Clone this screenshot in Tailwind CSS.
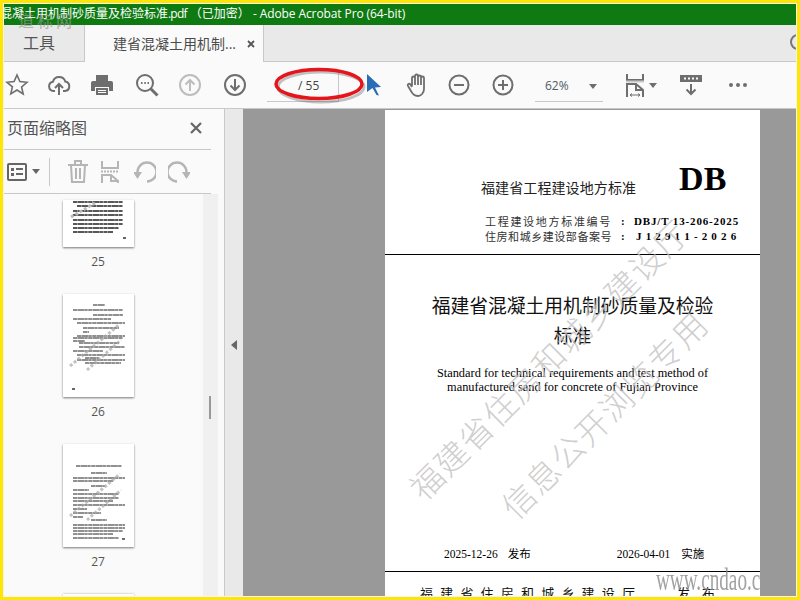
<!DOCTYPE html>
<html lang="zh-CN">
<head>
    <meta charset="UTF-8">
    <title>Adobe Acrobat Pro</title>
    <script src="https://cdn.jsdelivr.net/npm/@tailwindcss/browser@4"></script>
</head>
<body class="w-[800px] h-[600px] overflow-hidden bg-[#ffe600] p-[3px] font-['Open_Sans','Noto_Sans_CJK_SC',sans-serif]">
<div class="relative w-[794px] h-[594px] border border-[#f4f4f4] bg-[#fafafa] flex flex-col overflow-hidden">

    <!-- title bar -->
    <div class="h-[21px] shrink-0 bg-[#0f7a12] text-white text-[12px] leading-[19px] whitespace-nowrap -ml-[4px]">混凝土用机制砂质量及检验标准<span class="tracking-[-.8px]">.pdf</span> （已加密） <span class="tracking-[-.1px]">- Adobe Acrobat Pro (64-bit)</span></div>

    <!-- tabs -->
    <div class="h-[37px] shrink-0 bg-[#e9e9e9] border-b border-[#c8c8c8] flex relative">
        <div class="w-[80px] flex items-center pl-[19px] text-[16px] text-[#555]">工具</div>
        <div class="w-[180px] h-[37px] bg-[#fafafa] border-l border-r border-[#c8c8c8] flex items-center pl-[28px] text-[14px] text-[#4b4b4b] whitespace-nowrap">
            建省混凝土用机制...
            <svg class="ml-[11px]" width="8" height="8" viewBox="0 0 8 8"><path d="M1 1l6 6M7 1l-6 6" stroke="#555" stroke-width="1.8"/></svg>
        </div>
        <div class="absolute right-[-10px] top-[9px] w-[16px] h-[16px] rounded-full border-2 border-[#777]"></div>
        <div class="absolute left-[14px] top-[-15px] text-[16px] tracking-[3px] text-[#9a9a9a]/70 font-['Liberation_Serif','Noto_Sans_CJK_SC',serif]">道标网</div>
    </div>

    <!-- toolbar -->
    <div class="h-[47px] shrink-0 bg-[#fafafa] border-b border-[#c8c8c8] flex items-center text-[#6e6e6e] relative">
        <svg class="ml-[1px]" width="24" height="24" viewBox="0 0 24 24" fill="none" stroke="#6e6e6e" stroke-width="1.6"><path d="M12 2l2.9 6.6 7.1.7-5.4 4.7 1.6 7L12 17l-6.2 3.900 1.600-7L2 9.300l7.100-.7z"/></svg>
        <svg class="ml-[18px]" width="24" height="24" viewBox="0 0 24 24" fill="none" stroke="#6e6e6e" stroke-width="2"><path d="M8 18H6.500a4.700 4.700 0 0 1-.6-9.300A6.500 6.500 0 0 1 18.300 8.500 4.800 4.800 0 0 1 18 18h-2"/><path d="M12 22V11M8 15l4-4 4 4"/></svg>
        <svg class="ml-[19px]" width="24" height="24" viewBox="0 0 24 24"><path fill="#6e6e6e" d="M6 2h12v6H6zM3 8h18a2 2 0 0 1 2 2v8h-4v-4H5v4H1v-8a2 2 0 0 1 2-2z"/><path fill="#6e6e6e" d="M6 15h12v7H6z"/><path fill="#fafafa" d="M8 17h8v1H8zM8 19h8v1H8z"/></svg>
        <svg class="ml-[21px]" width="24" height="24" viewBox="0 0 24 24" fill="none" stroke="#6e6e6e"><circle cx="10" cy="10" r="8" stroke-width="2"/><path d="M15.500 15.500l7 7" stroke-width="3"/><path d="M6 10h1.500M9.300 10h1.500M12.500 10h1.500" stroke-width="1.800"/></svg>
        <svg class="ml-[19px]" width="24" height="24" viewBox="0 0 24 24" fill="none" stroke="#bdbdbd" stroke-width="2"><circle cx="12" cy="12" r="10"/><path d="M12 18V7M7.500 11.500L12 7l4.500 4.500"/></svg>
        <svg class="ml-[21px]" width="24" height="24" viewBox="0 0 24 24" fill="none" stroke="#6e6e6e" stroke-width="2"><circle cx="12" cy="12" r="10"/><path d="M12 6v11M7.500 12.500L12 17l4.500-4.500"/></svg>
        <div class="ml-[20px] w-[72px] h-[30px] mt-[3px] border-b border-r border-[#c8c8c8] text-[12px] text-[#444] flex items-center pl-[31px]">/ 55</div>
        <svg class="ml-[27px]" width="16" height="22" viewBox="0 0 16 22"><path fill="#2a6db5" d="M1 0l14 13-6 .5 4 8-2.500-.5-4-7L1 18z"/></svg>
        <svg class="ml-[24px]" width="24" height="25" viewBox="0 0 24 25" fill="none" stroke="#6e6e6e" stroke-width="1.800"><path d="M6 13V5a1.500 1.500 0 0 1 3 0V3a1.500 1.500 0 0 1 3 0v1a1.500 1.500 0 0 1 3 0v1a1.500 1.500 0 0 1 3 0v11c0 4-3 7-6 7-4 0-5-2-7-5l-3-5c-1-2 1-3 2.500-1.500L6 14"/><path d="M9 5v7M12 4v8M15 5v7"/></svg>
        <svg class="ml-[18px]" width="22" height="22" viewBox="0 0 22 22" fill="none" stroke="#6e6e6e" stroke-width="2"><circle cx="11" cy="11" r="9.500"/><path d="M6 11h10"/></svg>
        <svg class="ml-[22px]" width="22" height="22" viewBox="0 0 22 22" fill="none" stroke="#6e6e6e" stroke-width="2"><circle cx="11" cy="11" r="9.500"/><path d="M6 11h10M11 6v10"/></svg>
        <div class="ml-[21px] w-[68px] h-[30px] mt-[3px] border-b border-[#c8c8c8] text-[12px] text-[#4f5b66] flex items-center pl-[10px]">62%
            <span class="ml-[20px] w-0 h-0 border-l-[4px] border-r-[4px] border-t-[5px] border-l-transparent border-r-transparent border-t-[#6e6e6e]"></span>
        </div>
        <svg class="ml-[23px] mt-[2px]" width="18" height="24" viewBox="0 0 18 24" fill="none" stroke="#6e6e6e" stroke-width="2"><path d="M1 0v6h16V0"/><path d="M0 7.500h18" stroke="#c8c8c8"/><path d="M1 23V10h9l7 6v7M10 10v6h7" /><path d="M4 21h10M4 21l2-1.500M4 21l2 1.500M14 21l-2-1.500M14 21l-2 1.500" stroke-width="1"/></svg>
        <span class="ml-[5px] w-0 h-0 border-l-[4px] border-r-[4px] border-t-[5px] border-l-transparent border-r-transparent border-t-[#6e6e6e]"></span>
        <svg class="ml-[23px]" width="22" height="22" viewBox="0 0 22 22"><path fill="#6e6e6e" d="M0 1h22v7H0z"/><path fill="#fafafa" d="M4 3.500h2v2H4zM8 3.500h2v2H8zM12 3.500h2v2h-2zM16 3.500h2v2h-2z"/><path d="M11 10v10M6.500 15.500L11 20l4.500-4.500" fill="none" stroke="#6e6e6e" stroke-width="2"/></svg>
        <div class="ml-[27px] flex gap-[3px]">
            <span class="w-[4px] h-[4px] rounded-full bg-[#6e6e6e]"></span>
            <span class="w-[4px] h-[4px] rounded-full bg-[#6e6e6e]"></span>
            <span class="w-[4px] h-[4px] rounded-full bg-[#6e6e6e]"></span>
        </div>
    </div>

    <!-- red ring drawn over the page box -->
    <svg class="absolute left-[266px] top-[58px]" width="106" height="46" viewBox="0 0 106 46" fill="none">
        <ellipse cx="51" cy="25" rx="43" ry="15" stroke="#555" stroke-opacity=".35" stroke-width="3"/>
        <ellipse cx="49" cy="22" rx="43" ry="14.500" stroke="#e4151b" stroke-width="3.500"/>
    </svg>

    <div class="flex flex-1 min-h-0">
        <!-- thumbnails panel -->
        <aside class="w-[220px] shrink-0 bg-[#fafafa] flex flex-col">
            <div class="h-[41px] shrink-0 w-[207px] border-b border-[#c8c8c8] flex items-center justify-between pb-[2px] pl-[3px] pr-[9px] text-[16px] text-[#555]">
                <span>页面缩略图</span>
                <svg width="12" height="12" viewBox="0 0 12 12"><path d="M1 1l10 10M11 1L1 11" stroke="#666" stroke-width="2.200"/></svg>
            </div>
            <div class="h-[44px] shrink-0 w-[207px] border-b border-[#c8c8c8] flex items-center pl-[3px]">
                <svg width="20" height="18" viewBox="0 0 20 18" fill="none"><rect x="1" y="1" width="18" height="16" rx="1" stroke="#666" stroke-width="2"/><path fill="#666" d="M4 5h3v3H4zM4 10h3v3H4zM9 5h7v2H9zM9 10h7v2H9z"/></svg>
                <span class="ml-[5px] w-0 h-0 border-l-[4px] border-r-[4px] border-t-[5px] border-l-transparent border-r-transparent border-t-[#666]"></span>
                <span class="ml-[9px] w-px h-[28px] bg-[#c8c8c8]"></span>
                <svg class="ml-[18px]" width="20" height="23" viewBox="0 0 20 23" fill="none" stroke="#b5b5b5" stroke-width="2"><path d="M0 5h20M7 5V1h6v4M3 5l1 17h12l1-17M8 8v11M12 8v11"/></svg>
                <svg class="ml-[13px]" width="18" height="22" viewBox="0 0 18 22" fill="none" stroke="#b5b5b5" stroke-width="2"><path d="M1 0v7h16V0M1 22V14h9l7 6v2M10 14v6h7"/><path d="M0 10.500h18" stroke-dasharray="2 1"/></svg>
                <svg class="ml-[15px]" width="22" height="22" viewBox="0 0 22 22" fill="none" stroke="#b5b5b5" stroke-width="2.400"><path d="M13 20.500A9.500 9.500 0 1 0 3.500 11"/><path fill="#b5b5b5" stroke="none" d="M-1 11h9l-4.500 7z"/></svg>
                <svg class="ml-[12px]" width="22" height="22" viewBox="0 0 22 22" fill="none" stroke="#b5b5b5" stroke-width="2.400"><path d="M9 20.500A9.500 9.500 0 1 1 18.500 11"/><path fill="#b5b5b5" stroke="none" d="M23 11h-9l4.500 7z"/></svg>
            </div>
            <div class="flex-1 min-h-0 flex overflow-hidden">
                <div class="w-[199px] h-full overflow-hidden relative pt-[6px] flex flex-col items-center pr-[11px] text-[12px] text-[#555]">
                    <!-- page 25, scrolled partly out of the panel -->
                    <div class="h-[47px] w-[71px] shrink-0 bg-white shadow-[0_1px_2px_#777] overflow-hidden">
                        <svg class="blur-[.35px]" width="71" height="47" viewBox="0 0 71 47" fill="none"><path d="M10 2h50M14 6h46M10 11h50M10 15h50M10 20h50M10 24h50M10 28h46M10 32h40" stroke="#222" stroke-width="1.300" stroke-dasharray="4 .4 7 .3 3 .5"/><path d="M60 38h3" stroke="#333" stroke-width="1.500"/><path d="M8 17l24-14" stroke="#bbb" stroke-width="3" stroke-dasharray="3 2"/></svg>
                    </div>
                    <div class="h-[47px] shrink-0 pt-[6px]">25</div>
                    <!-- page 26 -->
                    <div class="h-[103px] w-[71px] shrink-0 bg-white shadow-[0_1px_2px_#777]">
                        <svg class="blur-[.35px]" width="71" height="103" viewBox="0 0 71 103" fill="none"><path d="M30 11h12M10 16h50M30 21h30M10 25h38M14 29h48M20 34h36M20 38h6M14 42h48M10 44h50M10 47h12M16 49h40M16 53h46M10 57h30M14 61h48M22 64h14M14 66h48M22 69h36" stroke="#222" stroke-width="1.200" stroke-dasharray="4 .4 7 .3 3 .5"/><path d="M9 95h3" stroke="#333" stroke-width="1.500"/><path d="M7 72l50-42M24 76l34-30" stroke="#aaa" stroke-width="3" stroke-dasharray="3 2" opacity=".7"/></svg>
                    </div>
                    <div class="h-[47px] shrink-0 pt-[6px]">26</div>
                    <!-- page 27 -->
                    <div class="h-[103px] w-[71px] shrink-0 bg-white shadow-[0_1px_2px_#777]">
                        <svg class="blur-[.35px]" width="71" height="103" viewBox="0 0 71 103" fill="none"><path d="M13 22h46M28 29h16M10 34h52M10 37h40M28 42h14M10 46h16M10 50h46M10 54h46M10 57h40M10 61h52M10 65h14M10 69h28M10 73h10M28 76h16M10 81h52M10 84h52M10 87h50M10 90h40M10 94h46" stroke="#222" stroke-width="1.200" stroke-dasharray="4 .4 7 .3 3 .5"/><path d="M59 95h3" stroke="#333" stroke-width="1.400"/><path d="M7 72l50-42M24 76l34-30" stroke="#aaa" stroke-width="3" stroke-dasharray="3 2" opacity=".7"/></svg>
                    </div>
                    <div class="h-[47px] shrink-0 pt-[6px]">27</div>
                    <div class="h-[10px] w-[71px] shrink-0 bg-white shadow-[0_0_2px_#aaa]"></div>
                </div>
                <div class="w-[15px] h-full bg-[#f0f0f0] relative">
                    <div class="absolute left-[6px] top-[202px] w-[2px] h-[23px] bg-[#999]"></div>
                </div>
            </div>
        </aside>

        <!-- collapse gutter -->
        <div class="w-[19px] shrink-0 bg-[#e9e9e9] border-l border-[#c8c8c8] flex items-center justify-center">
            <span class="mr-[1px] mt-[-16px] w-0 h-0 border-t-[5px] border-b-[5px] border-r-[6px] border-t-transparent border-b-transparent border-r-[#666]"></span>
        </div>

        <!-- document -->
        <main class="flex-1 bg-[#999] pl-[142px] pr-[36px] pt-px overflow-hidden relative">
            <div class="relative h-[490px] bg-white overflow-hidden text-black font-['Liberation_Serif','Noto_Sans_CJK_SC',serif]">
                <div class="h-[145px] border-b border-black relative">
                    <div class="flex items-end pt-[49px] pl-[96px]">
                        <span class="text-[14px] tracking-[.1px] leading-[24px] text-[#222] font-['Noto_Sans_CJK_SC',sans-serif]">福建省工程建设地方标准</span>
                        <span class="ml-[43px] text-[34px] leading-[40px] font-bold">DB</span>
                    </div>
                    <div class="mt-[15px] pl-[100px] text-[11px] leading-[15px] whitespace-nowrap">
                        <div class="flex"><span class="w-[136px] tracking-[1.7px] text-[#333] font-['Noto_Sans_CJK_SC',sans-serif]">工程建设地方标准编号</span><span class="w-[13px] font-bold">:</span><span class="font-bold tracking-[.85px]">DBJ/T 13-206-2025</span></div>
                        <div class="flex"><span class="w-[136px] tracking-[.55px] text-[#333] font-['Noto_Sans_CJK_SC',sans-serif]">住房和城乡建设部备案号</span><span class="w-[15px] font-bold">:</span><span class="font-bold tracking-[.7px]">J 1 2 9 1 1 - 2 0 2 6</span></div>
                    </div>
                </div>
                <div class="h-[317px] border-b border-black text-center">
                    <div class="pt-[35px] text-[18.8px] leading-[30px] text-[#111] font-['Noto_Sans_CJK_SC',sans-serif]">福建省混凝土用机制砂质量及检验<br>标准</div>
                    <div class="mt-[16px] text-[12.35px] leading-[14px]">Standard for technical requirements and test method of<br>manufactured sand for concrete of Fujian Province</div>
                    <div class="mt-[152px] flex text-[11.500px] leading-[16px] text-left whitespace-nowrap">
                        <span class="ml-[59px]">2025-12-26</span><span class="ml-[10px]">发布</span>
                        <span class="ml-[86px]">2026-04-01</span><span class="ml-[11px]">实施</span>
                    </div>
                </div>
                <div class="pt-[12px] pl-[35px] flex text-[13px] leading-[18px] whitespace-nowrap text-[#111] font-['Noto_Sans_CJK_SC',sans-serif]">
                    <span class="w-[257px] tracking-[7.2px]">福建省住房和城乡建设厅</span>
                    <span class="tracking-[12px]">发布</span>
                </div>
                <!-- watermarks -->
                <div class="absolute left-[-26px] top-[231px] w-[378px] text-center -rotate-45 text-[33px] leading-[36px] tracking-[1.400px] font-light whitespace-nowrap text-[#c2c2c2]/80 font-['Noto_Sans_CJK_SC',sans-serif]">福建省住房和城乡建设厅</div>
                <div class="absolute left-[81px] top-[286px] w-[275px] text-center -rotate-45 text-[33px] leading-[36px] tracking-[1.400px] font-light whitespace-nowrap text-[#c2c2c2]/80 font-['Noto_Sans_CJK_SC',sans-serif]">信息公开浏览专用</div>
                <div class="absolute left-[271px] top-[451px] text-[32px] leading-[36px] whitespace-nowrap text-[#8a8a8a]/80 scale-x-[.6] origin-left">www.cndao.com</div>
            </div>
        </main>
    </div>
</div>
</body>
</html>
